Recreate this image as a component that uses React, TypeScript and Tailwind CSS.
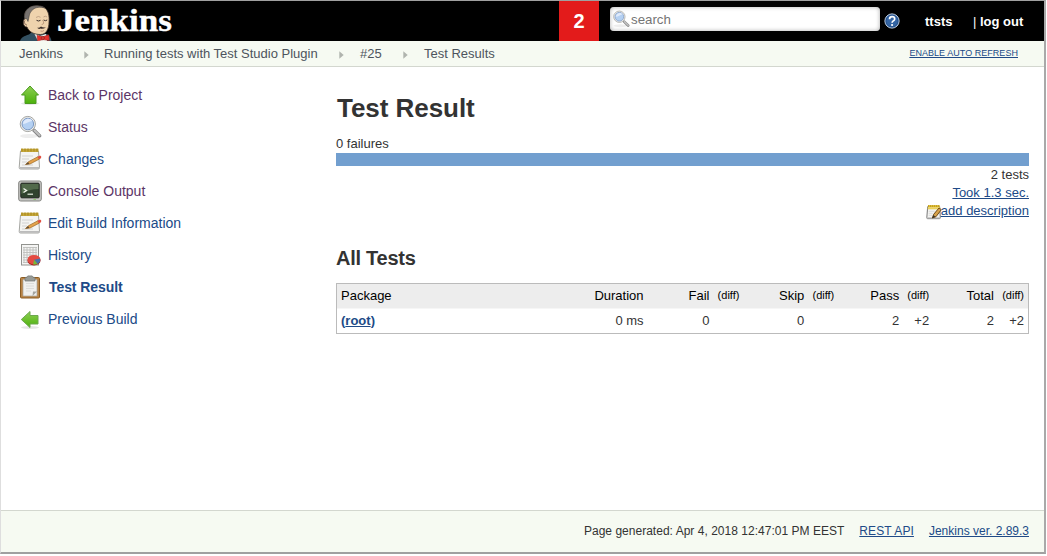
import type { ReactNode } from "react";

function JenkinsHead() {
  return (
    <svg width="34" height="36" viewBox="0 0 34 36" className="block">
      <path d="M1 36 C2 32.5 5 31 10 29.5 L13 27 L28 29 C31 31 32 33 32.5 36 Z" fill="#335061" />
      <path d="M15 28 L21 31 L27 29 L28 36 H19 Z" fill="#f3f3ef" />
      <path d="M9 4 C12 .5 21 -.5 26 3 C29.5 6 30.5 11 30 17 C30 24 27 29.5 21.5 29.5 C15 29.5 10 27 8 22 C3.5 22 3.5 15 6 13.5 C5 9 6 6 9 4Z" fill="#efd3ad" stroke="#43352d" strokeWidth=".8" />
      <path d="M5.5 14 C4.5 7 9 1 16 .8 C20 .4 24 1.2 26 3 C21 1.8 17 2 14 4.5 C11 7 10.5 9 10 12 L9 16.5 L7.5 13.5 Z" fill="#77726f" stroke="#3b3735" strokeWidth=".5" />
      <path d="M6 15.5 C4.5 17 6 20 8 20" fill="none" stroke="#765849" strokeWidth=".9" />
      <path d="M17 12.5 q2.5 -2 4.5 -.2 M24.5 12 q1.8 -1.6 3.6 0" fill="none" stroke="#b5977c" strokeWidth=".8" />
      <path d="M17.5 15.3 q2 1.4 4 0 M24.6 15 q2 1.4 3.6 0" fill="none" stroke="#3d302b" strokeWidth="1" />
      <path d="M23.5 15 q2.8 4 -.8 4.5" fill="none" stroke="#b08b70" strokeWidth=".8" />
      <path d="M18 22.5 Q20 23.2 22 21.4 Q24 22.8 27.3 22.2 Q24 24.4 21.5 23.6 Q19.5 24.6 18 22.5Z" fill="#3a2e2a" />
      <path d="M21.5 26 q2 .8 3.5 -.5" stroke="#b9836b" fill="none" strokeWidth=".8" />
      <path d="M18 30.3 L23.7 31.8 L29.8 29.8 L30.3 35.5 L24 34.6 L18.5 36Z" fill="#e5302c" stroke="#a3231f" strokeWidth=".5" />
      <circle cx="23.8" cy="33" r="1.7" fill="#d33833" stroke="#81231f" strokeWidth=".6" />
    </svg>
  );
}

function Magnifier({ size }: { size: number }) {
  return (
    <svg width={size} height={size} viewBox="0 0 24 24" className="block shrink-0">
      <ellipse cx="11" cy="21" rx="9" ry="2" fill="#ededed" />
      <path d="M16.2 15.5 L21.5 20.7" stroke="#858585" strokeWidth="3.6" strokeLinecap="round" />
      <path d="M16.5 15.5 L21.5 20.4" stroke="#c2c2c2" strokeWidth="2" strokeLinecap="round" />
      <circle cx="9.8" cy="9" r="7.6" fill="#f1f1ef" stroke="#a5a6a2" strokeWidth="1" />
      <circle cx="9.8" cy="9" r="5.8" fill="#b4d0f2" stroke="#7d9ac4" strokeWidth="1" />
      <path d="M5 9 C5.3 4 12.3 2 14.3 6 C11.3 6 8.3 9 5 9Z" fill="#dfeafb" />
    </svg>
  );
}

function Arrow({ left }: { left?: boolean }) {
  return (
    <svg width="24" height="24" viewBox="0 0 24 24" className="block">
      <defs>
        <linearGradient id="green" x1="0" y1="0" x2="0" y2="1">
          <stop offset="0" stopColor="#8ecf55" />
          <stop offset="1" stopColor="#4cb10b" />
        </linearGradient>
      </defs>
      <ellipse cx="12" cy="20.5" rx="9" ry="1.4" fill="#e6e6e6" />
      {left ? (
        <path d="M3.3 12.5 L12 4.5 V8.5 H20 V17 H12 V20.5 Z" fill="url(#green)" stroke="#6da84f" />
      ) : (
        <path d="M12 3 L20.5 12 H18 V20.5 H7 V12 H3.5 Z" fill="url(#green)" stroke="#4c9b20" />
      )}
    </svg>
  );
}

function Notepad({ small }: { small?: boolean }) {
  return (
    <svg width={small ? 16 : 24} height={small ? 16 : 24} viewBox="0 0 24 24" className="block shrink-0">
      <path d="M2.5 4 H20.5 L21.5 20.5 Q21.5 22 20 22 H2.5 Q1 22 1.2 20.5Z" fill="#f4f4f2" stroke={small ? "#777" : "#a5a6a2"} strokeWidth={small ? 1.5 : 1} />
      <path d="M1.5 20 H21.3 V21.7 H1.5Z" fill="#bbb" />
      <path d="M3 1.7 H20.5 V5 H3Z" fill={small ? "#e5c22c" : "#c4a83c"} />
      <path d="M4 1.5 V4.5 M7 1.5 V4.5 M10 1.5 V4.5 M13 1.5 V4.5 M16 1.5 V4.5 M19 1.5 V4.5" stroke="#a88418" strokeWidth="1" />
      {small ? (
        <>
          <path d="M2.5 5 H21 V8 H2.5Z" fill="#edd25a" />
          <path d="M4 11 H13 M4 14 H10 M4 17 H9" stroke="#d2d2d2" />
          <path d="M9.5 21 L11.5 15.5 L19.5 6 L23 8.5 L15 19 Z" fill="#d8a34c" stroke="#6f4a16" strokeWidth="1.5" />
          <path d="M9.5 21 L11.2 16.5 L14 19Z" fill="#333" />
        </>
      ) : (
        <>
          <path d="M4 9 H15 M4 12 H11 M4 15 H9 M4 18 H15" stroke="#d2d2d2" />
          <path d="M7.5 17.5 L10.5 14.7 L20 9.7 L21.5 12 L12 17 Z" fill="#e4a24b" stroke="#9a6520" strokeWidth=".7" />
          <path d="M7.5 17.5 L10.2 15 L11.2 17Z" fill="#5d4b36" />
          <path d="M19.5 9.8 L22 8.6 Q24 9.2 23 11.2 L21 12.3Z" fill="#df4f40" />
        </>
      )}
    </svg>
  );
}

function Terminal() {
  return (
    <svg width="24" height="24" viewBox="0 0 24 24" className="block">
      <rect x=".7" y="2" width="22.6" height="20" rx="2" fill="#c6c6c3" stroke="#858682" />
      <rect x="2.8" y="4.2" width="18.4" height="14.6" rx="1" fill="#30432e" stroke="#1f241e" />
      <path d="M3.5 5 H20.5 V10 Q11 10 3.5 15Z" fill="#526a4b" />
      <path d="M5.5 9.5 L8.5 11.5 L5.5 13.5" fill="none" stroke="#f1f5ed" strokeWidth="1.4" />
      <path d="M9.5 15.2 H15" stroke="#e6eee1" strokeWidth="1.2" />
      <path d="M15.5 20.4 H18" stroke="#8ac86a" />
    </svg>
  );
}

function Report() {
  return (
    <svg width="24" height="24" viewBox="0 0 24 24" className="block">
      <rect x="3.5" y="1.5" width="17" height="20.5" fill="#f5f5f4" stroke="#92938f" />
      <path d="M5 4.5 H19 M5 7 H19 M5 9.5 H19 M5 12 H19 M5 14.5 H19 M5 17 H19 M5 19.5 H19 M6 4 V20 M9 4 V20 M12 4 V20 M15 4 V20 M18 4 V20" stroke="#bdbebb" strokeWidth=".9" />
      <ellipse cx="16" cy="17.7" rx="6.5" ry="4.8" fill="#a71f1c" />
      <ellipse cx="16" cy="16.7" rx="6.5" ry="4.8" fill="#e44b43" />
      <path d="M16 16.7 L22 15.5 Q23.2 19 19.5 20.9Z" fill="#4773ad" />
      <path d="M16 16.7 L19.5 20.9 Q17.5 21.9 15.2 21.5Z" fill="#72bd39" />
    </svg>
  );
}

function Clipboard() {
  return (
    <svg width="24" height="24" viewBox="0 0 24 24" className="block">
      <rect x="2.5" y="2.5" width="19" height="20.5" rx="1" fill="#b98447" stroke="#8b5d25" />
      <path d="M5 4.5 H19 V21 H5Z" fill="#f0f0ee" stroke="#aaa79f" strokeWidth=".7" />
      <path d="M8 8.5 H16 M8 11 H16 M8 13.5 H16 M8 16 H13" stroke="#dcdcda" />
      <path d="M14.5 21 L15 16.5 H19Z" fill="#a3a39f" />
      <path d="M7 6 V3.2 Q7 2.2 9 2.2 L9.8 .9 H14.2 L15 2.2 Q17 2.2 17 3.2 V6Z" fill="#989c98" stroke="#737773" strokeWidth=".7" />
    </svg>
  );
}

function Help() {
  return (
    <svg width="16" height="16" viewBox="0 0 16 16" className="block">
      <circle cx="8" cy="8" r="7.1" fill="#3465a4" stroke="#c4d4e7" strokeWidth="1" />
      <circle cx="8" cy="8" r="6" fill="none" stroke="#224b83" strokeWidth=".7" />
      <path d="M5.5 6.2 Q5.6 3.7 8.1 3.7 Q10.7 3.7 10.7 5.9 Q10.7 7.1 9.2 7.9 Q8.1 8.6 8.1 9.8" fill="none" stroke="#fff" strokeWidth="1.7" />
      <circle cx="8.1" cy="12" r="1.1" fill="#fff" />
    </svg>
  );
}

function Chevron() {
  return (
    <svg width="5" height="8" viewBox="0 0 5 8" className="mt-[2px] block shrink-0">
      <path d="M.3 .3 L4.7 4 L.3 7.7Z" fill="#b0b4ae" />
    </svg>
  );
}

const tasks: { label: string; icon: ReactNode; tone: string }[] = [
  { label: "Back to Project", icon: <Arrow />, tone: "text-[#5c3566]" },
  { label: "Status", icon: <Magnifier size={24} />, tone: "text-[#5c3566]" },
  { label: "Changes", icon: <Notepad />, tone: "text-[#204a87]" },
  { label: "Console Output", icon: <Terminal />, tone: "text-[#5c3566]" },
  { label: "Edit Build Information", icon: <Notepad />, tone: "text-[#204a87]" },
  { label: "History", icon: <Report />, tone: "text-[#204a87]" },
  { label: "Test Result", icon: <Clipboard />, tone: "font-bold text-[#204a87] pl-px tracking-[-0.08px]" },
  { label: "Previous Build", icon: <Arrow left />, tone: "text-[#204a87]" },
];

const groups = [
  { name: "Fail", count: "0", diff: "" },
  { name: "Skip", count: "0", diff: "" },
  { name: "Pass", count: "2", diff: "+2" },
  { name: "Total", count: "2", diff: "+2" },
];

export default function App() {
  return (
    <div className="h-[556px] w-[1047px] bg-white font-['Liberation_Sans',Arial,sans-serif] text-[12px] text-[#333]">
      <div className="flex h-[554px] w-[1046px] flex-col border-t border-r-2 border-b-2 border-l border-t-[#a0a0a0] border-r-[#a9a9a9] border-b-[#a0a0a0] border-l-[#dedede]">
        <header className="flex h-10 shrink-0 bg-black text-white">
          <div className="flex h-10 w-[558px] overflow-hidden pl-[18px]">
            <div className="pt-1">
              <JenkinsHead />
            </div>
            <span className="ml-1 origin-left scale-x-[1.13] font-['Liberation_Serif',serif] text-[31px] leading-[39px] font-bold [-webkit-text-stroke:0.4px_white]">
              Jenkins
            </span>
          </div>
          <div className="flex w-10 items-center justify-center bg-[#e31b1b] text-[20px] font-bold">2</div>
          <div className="mt-[6px] ml-[11px] flex h-6 w-[270px] items-center rounded-[4px] bg-white pl-[2px] text-[13.3px] text-[#757575] shadow-[inset_0_0_4px_#aaa]">
            <Magnifier size={18} />
            <span className="ml-px pt-px">search</span>
          </div>
          <div className="mt-3 ml-1">
            <Help />
          </div>
          <div className="ml-[25px] flex pt-[12px] text-[13px] leading-[18px] font-bold">
            <span className="w-[48px]">ttsts</span>
            <span className="font-normal whitespace-pre">| </span>
            <span>log out</span>
          </div>
        </header>

        <nav className="flex h-[26px] shrink-0 items-center justify-between border-b border-[#d3d7cf] bg-[#f6faf2] pr-[26px] pl-[18px] text-[13px] text-[#4d545d]">
          <div className="flex items-center">
            <span className="w-[65px]">Jenkins</span>
            <Chevron />
            <span className="ml-[15px] w-[235px]">Running tests with Test Studio Plugin</span>
            <Chevron />
            <span className="ml-[16px] w-[43px]">#25</span>
            <Chevron />
            <span className="ml-4">Test Results</span>
          </div>
          <span className="pt-px text-[9px] tracking-[0.04px] text-[#204a87] underline">ENABLE AUTO REFRESH</span>
        </nav>

        <div className="flex grow">
          <aside className="w-[335px] pt-3 pl-[17px]">
            {tasks.map((t) => (
              <div key={t.label} className="flex h-8 items-center gap-[6px] text-[14px]">
                {t.icon}
                <span className={t.tone}>{t.label}</span>
              </div>
            ))}
          </aside>
          <main className="w-[693px] text-[13px]">
            <h1 className="pt-[25px] pl-px text-[26px] leading-8 font-bold tracking-[-0.05px]">Test Result</h1>
            <div className="mt-3 h-[17px] leading-[15px]">0 failures</div>
            <div className="h-[13px] bg-[#729fcf]" />
            <div className="flex flex-col items-end leading-[18px]">
              <span>2 tests</span>
              <span className="text-[#204a87] underline">Took 1.3 sec.</span>
              <span className="flex h-[18px] items-start text-[#204a87]">
                <span className="pt-[2px]">
                  <Notepad small />
                </span>
                <span className="-ml-px underline">add description</span>
              </span>
            </div>
            <h2 className="mt-[26px] text-[20px] leading-6 font-bold tracking-[-0.25px]">All Tests</h2>
            <div className="mt-[13px] border border-[#bbb]">
              <div className="flex h-[25px] items-center border-b border-[#f6f6f6] bg-[#ededed] pr-1 pb-px pl-1 text-black">
                <span className="w-[203px]">Package</span>
                <span className="w-[100px] text-right">Duration</span>
                {groups.map((g, i) => (
                  <div key={g.name} className={i === 0 ? "flex w-[96px] items-center" : "flex w-[95px] items-center"}>
                    <span className="grow text-right">{g.name}</span>
                    <span className="w-[30px] text-right text-[11px]">(diff)</span>
                  </div>
                ))}
              </div>
              <div className="flex h-6 items-center pr-1 pb-px pl-1">
                <span className="w-[203px] font-bold text-[#204a87]">
                  (<span className="underline">root</span>)
                </span>
                <span className="w-[100px] text-right">0 ms</span>
                {groups.map((g, i) => (
                  <div key={g.name} className={i === 0 ? "flex w-[96px]" : "flex w-[95px]"}>
                    <span className="grow text-right">{g.count}</span>
                    <span className="w-[30px] text-right">{g.diff}</span>
                  </div>
                ))}
              </div>
            </div>
          </main>
        </div>

        <footer className="flex h-[42px] shrink-0 items-center justify-end gap-[15px] border-t border-[#d3d7cf] bg-[#f6faf2] pr-[15px] pb-[2px]">
          <span className="tracking-[0.02px]">Page generated: Apr 4, 2018 12:47:01 PM EEST</span>
          <span className="tracking-[0.1px] text-[#204a87] underline">REST API</span>
          <span className="text-[#204a87] underline">Jenkins ver. 2.89.3</span>
        </footer>
      </div>
    </div>
  );
}
